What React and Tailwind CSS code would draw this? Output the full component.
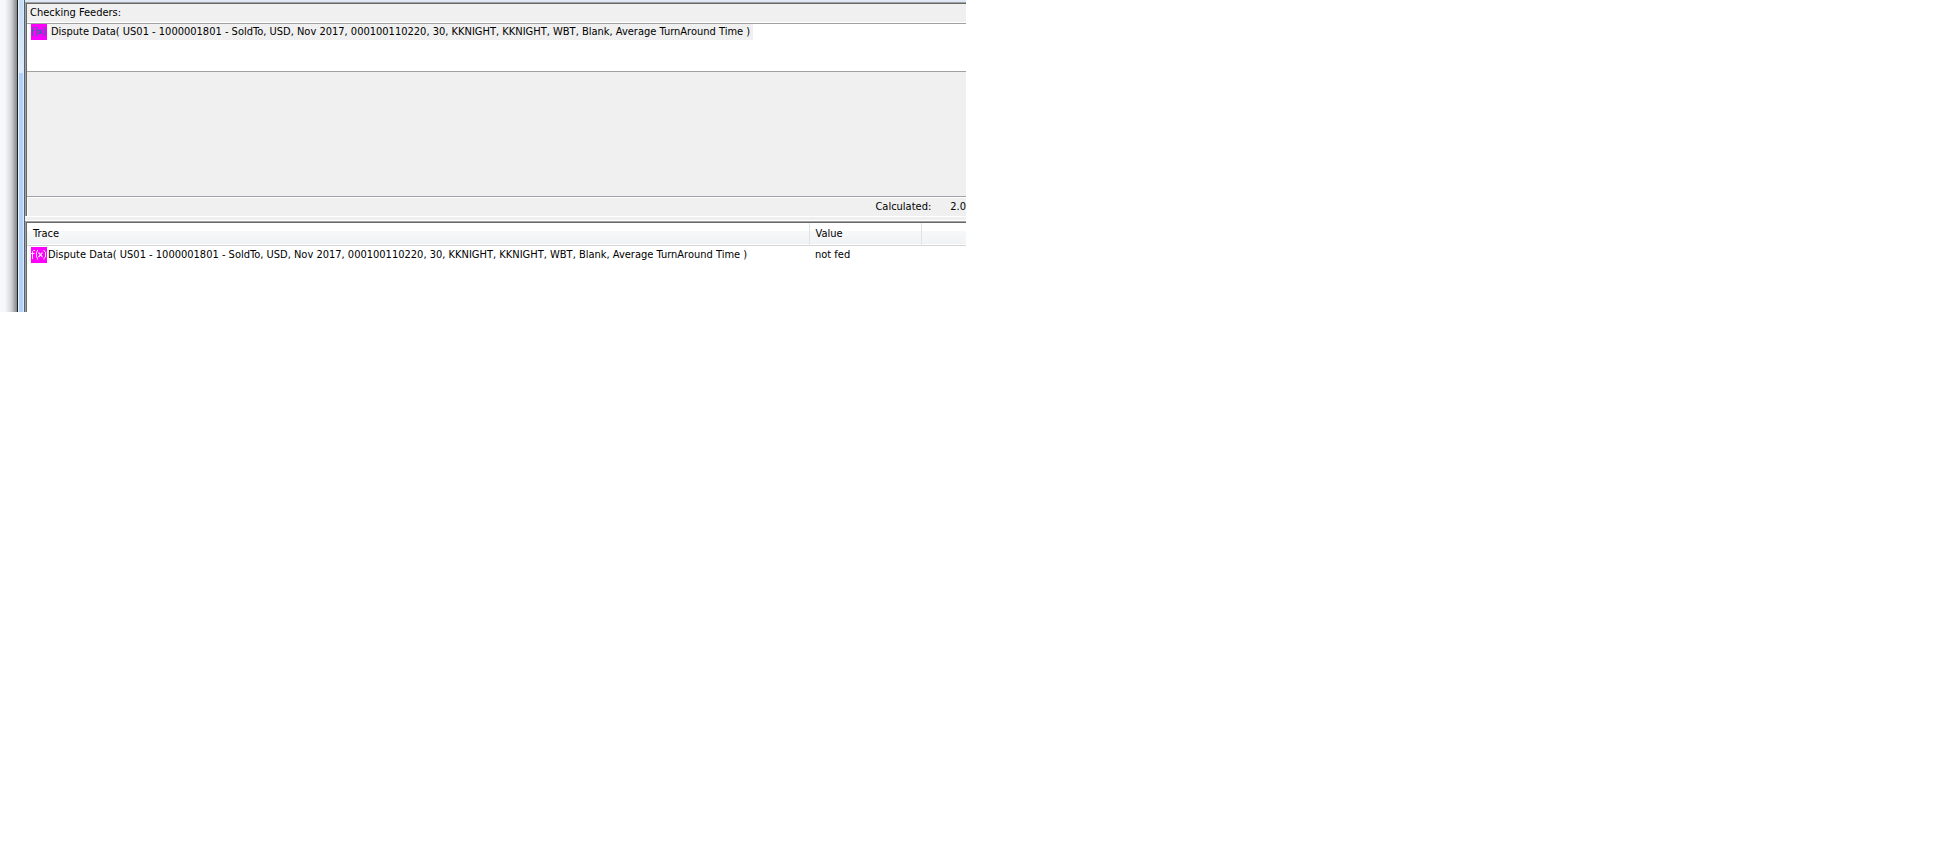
const ELEMENT =
  "Dispute Data( US01 - 1000001801 - SoldTo, USD, Nov 2017, 000100110220, 30, KKNIGHT, KKNIGHT, WBT, Blank, Average TurnAround Time )";

function RuleIcon({ color }) {
  return (
    <svg
      viewBox="0 0 16 16"
      className={`size-4 shrink-0 ${color}`}
      fill="none"
      stroke="currentColor"
      aria-hidden="true"
    >
      <rect width="16" height="16" fill="#ff00ff" stroke="none" />
      <path d="M4 3.5H2.5L1.5 4.5V12M0 6.5H3.5" />
      <path d="M6.5 3V4L5.5 5V10L6.5 11V12.5" />
      <path strokeWidth="1.2" d="M7.5 5.5L11.5 10M11.5 5.5L7.5 10" />
      <path d="M13 3V4L14.5 5V10L13 11V12.5" />
    </svg>
  );
}

function WindowFrame() {
  return (
    <div className="flex w-[25px] shrink-0" aria-hidden="true">
      <div className="w-[17px] bg-linear-to-r from-[#f6f8fc] from-30% via-[#d4d6d9] via-65% to-[#858585]" />
      <div className="w-px bg-[#202020]" />
      <div className="w-px bg-[#e8f2fc]" />
      <div className="flex w-1 flex-col">
        <div className="h-[73px] bg-linear-to-b from-[#c4dcf5] to-[#dcebfb]" />
        <div className="grow bg-[#b0d2f8]" />
      </div>
      <div className="w-px bg-[#dcebfa]" />
      <div className="w-px bg-[#4f6377]" />
    </div>
  );
}

function SunkenPanel({ children }) {
  return (
    <section className="border-t border-l border-[#a0a0a0]">
      <div className="border-t border-l border-[#696969]">{children}</div>
    </section>
  );
}

function FeederPanel() {
  return (
    <SunkenPanel>
      <h1 className="flex h-[19px] items-center border-b border-b-white pl-[3px]">
        Checking Feeders:
      </h1>
      <ul className="h-12 border-t border-[#a0a0a0] bg-white pl-1">
        <li className="flex h-4 items-center gap-[3px]">
          <RuleIcon color="text-[#2f6f9c]" />
          <span className="bg-[#f0f0f0] pr-[3px] pl-px leading-4 whitespace-nowrap">{ELEMENT}</span>
        </li>
      </ul>
      <div className="h-[125px] border-t border-[#a0a0a0]" />
      <div className="flex h-[20px] items-center justify-end gap-[19px] border-t border-[#a0a0a8] shadow-[inset_1px_1px_0_#ffffff]">
        <span>Calculated:</span>
        <span>2.0</span>
      </div>
    </SunkenPanel>
  );
}

function TracePanel() {
  return (
    <SunkenPanel>
      <div className="h-[89px] bg-white">
        <table className="w-full table-fixed border-collapse text-left">
          <colgroup>
            <col />
            <col className="w-[112px]" />
            <col className="w-[45px]" />
          </colgroup>
          <thead>
            <tr className="h-[22px] border-b border-[#d5d5d5] bg-linear-to-b from-white from-40% via-[#f7f8fa] via-40% to-[#f1f2f4]">
              <th className="border-r border-[#e2e3e5] p-0 pt-px pl-[6px] font-normal">Trace</th>
              <th className="border-r border-[#e2e3e5] p-0 pt-px pl-[6px] font-normal">Value</th>
              <td className="p-0" />
            </tr>
          </thead>
          <tbody>
            <tr>
              <td className="p-0 pt-px pl-1">
                <div className="flex items-center gap-px">
                  <RuleIcon color="text-[#ffe0ff]" />
                  <span className="leading-4 whitespace-nowrap">{ELEMENT}</span>
                </div>
              </td>
              <td className="p-0 pt-px pl-[6px]">not fed</td>
              <td className="p-0" />
            </tr>
          </tbody>
        </table>
      </div>
    </SunkenPanel>
  );
}

export default function App() {
  return (
    <div className="min-h-screen bg-white">
      <main className="flex w-full max-w-[966px] overflow-hidden bg-[#f0f0f0] font-['DejaVu_Sans_Condensed','DejaVu_Sans',sans-serif] text-[11px] leading-4 text-black">
        <WindowFrame />
        <div className="min-w-0 grow">
          <div className="h-[2px] bg-[#dfe9f5]" />
          <FeederPanel />
          <div className="h-[5px] border-y border-y-white" />
          <TracePanel />
        </div>
      </main>
    </div>
  );
}
